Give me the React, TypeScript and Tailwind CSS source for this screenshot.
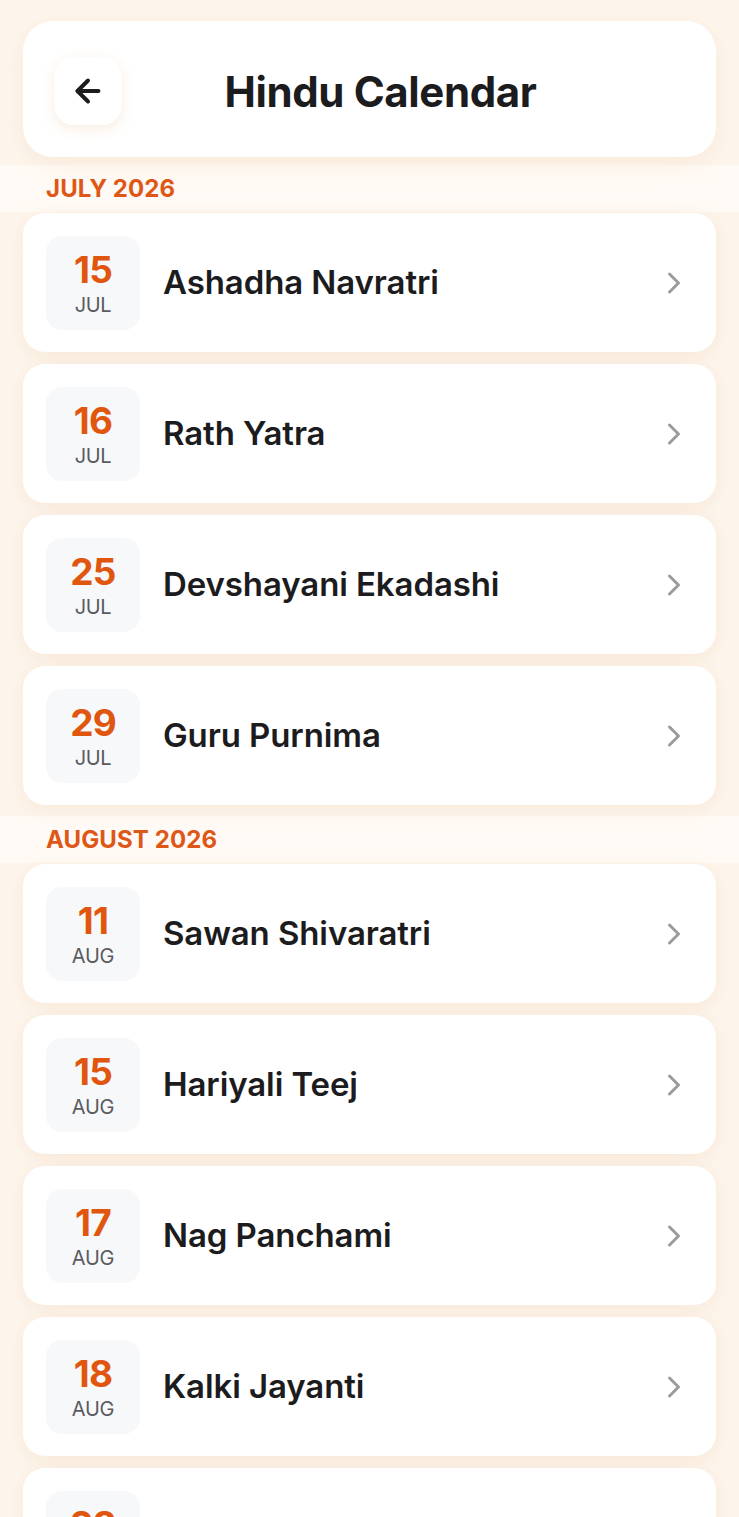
import { ArrowLeft, ChevronRight } from "lucide-react";

type Festival = { day: string; mon: string; name: string };

const sections: { title: string; items: Festival[] }[] = [
  {
    title: "JULY 2026",
    items: [
      { day: "15", mon: "JUL", name: "Ashadha Navratri" },
      { day: "16", mon: "JUL", name: "Rath Yatra" },
      { day: "25", mon: "JUL", name: "Devshayani Ekadashi" },
      { day: "29", mon: "JUL", name: "Guru Purnima" },
    ],
  },
  {
    title: "AUGUST 2026",
    items: [
      { day: "11", mon: "AUG", name: "Sawan Shivaratri" },
      { day: "15", mon: "AUG", name: "Hariyali Teej" },
      { day: "17", mon: "AUG", name: "Nag Panchami" },
      { day: "18", mon: "AUG", name: "Kalki Jayanti" },
      { day: "28", mon: "AUG", name: "Raksha Bandhan" },
    ],
  },
];

function FestivalCard({ item }: { item: Festival }) {
  return (
    <div className="flex h-[139px] items-center rounded-[22px] bg-white pl-[23px] pr-[24px] shadow-[0_4px_18px_rgba(232,190,150,0.22)]">
      <div className="flex h-[94px] w-[94px] shrink-0 flex-col items-center justify-center rounded-[16px] bg-[#f7f8fa]">
        <span className="text-[37px] leading-[40px] font-bold tracking-[-0.8px] text-[#e0560f]">
          {item.day}
        </span>
        <span className="mt-[4px] text-[20px] leading-[22px] font-normal tracking-[-0.3px] text-[#5a5b5f]">
          {item.mon}
        </span>
      </div>
      <div className="ml-[23px] flex-1 text-[33px] font-semibold tracking-[-0.1px] text-[#1c1c1e]">
        {item.name}
      </div>
      <ChevronRight size={36} strokeWidth={2} className="text-[#9b9b9b]" />
    </div>
  );
}

export default function App() {
  return (
    <div
      className="min-h-[1517px] overflow-hidden bg-[#fdf5ec]"
      style={{ fontFamily: "Inter, 'Noto Sans', sans-serif" }}
    >
      <div className="px-[23px] pt-[21px]">
        <div className="relative flex h-[136px] items-center justify-center rounded-[30px] bg-white pl-[22px] shadow-[0_6px_22px_rgba(232,190,150,0.2)]">
          <button className="absolute left-[31px] top-[36px] flex h-[68px] w-[68px] items-center justify-center rounded-[20px] bg-white shadow-[0_4px_14px_rgba(232,190,150,0.28)]">
            <ArrowLeft size={36} strokeWidth={2.6} className="text-[#1c1c1e]" />
          </button>
          <h1 className="mt-[4px] text-[42px] font-bold tracking-[-0.4px] text-[#1c1c1e]">
            Hindu Calendar
          </h1>
        </div>
      </div>

      {sections.map((s, i) => (
        <section key={s.title} className={i === 0 ? "mt-[8px]" : "mt-[11px]"}>
          <div className="flex h-[47px] items-center bg-[#fffaf5] px-[46px]">
            <span className="text-[24px] font-bold tracking-[0.1px] text-[#de5716]">
              {s.title}
            </span>
          </div>
          <div className="flex flex-col gap-[12px] px-[23px] pt-[1px]">
            {s.items.map((it) => (
              <FestivalCard key={it.day + it.name} item={it} />
            ))}
          </div>
        </section>
      ))}
    </div>
  );
}
